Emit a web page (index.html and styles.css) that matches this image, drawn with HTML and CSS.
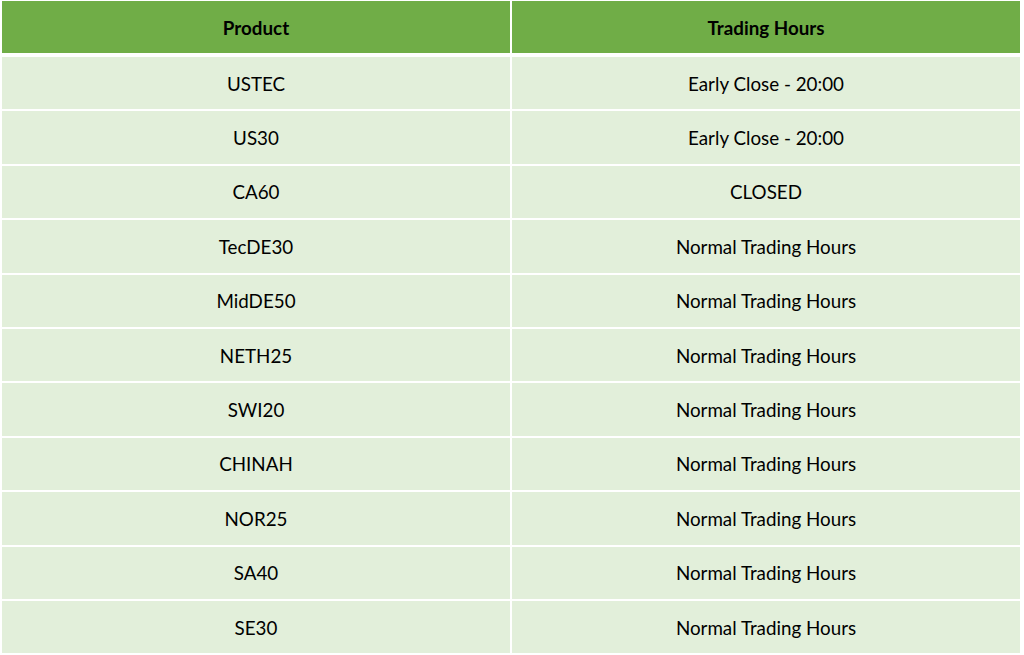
FILE: index.html
```html
<!DOCTYPE html>
<html>
<head>
<meta charset="utf-8">
<link rel="stylesheet" href="styles.css">
</head>
<body>
<div class="table">
  <div class="cell head">Product</div>
  <div class="cell head">Trading Hours</div>
  <div class="cell">USTEC</div><div class="cell">Early Close - 20:00</div>
  <div class="cell">US30</div><div class="cell">Early Close - 20:00</div>
  <div class="cell">CA60</div><div class="cell">CLOSED</div>
  <div class="cell">TecDE30</div><div class="cell">Normal Trading Hours</div>
  <div class="cell">MidDE50</div><div class="cell">Normal Trading Hours</div>
  <div class="cell">NETH25</div><div class="cell">Normal Trading Hours</div>
  <div class="cell">SWI20</div><div class="cell">Normal Trading Hours</div>
  <div class="cell">CHINAH</div><div class="cell">Normal Trading Hours</div>
  <div class="cell">NOR25</div><div class="cell">Normal Trading Hours</div>
  <div class="cell">SA40</div><div class="cell">Normal Trading Hours</div>
  <div class="cell">SE30</div><div class="cell">Normal Trading Hours</div>
</div>
</body>
</html>
```
FILE: styles.css
```css
html, body {
  margin: 0;
  padding: 0;
  background: #ffffff;
}
body {
  padding: 1px 0 0 2px;
  font-family: Lato, "Liberation Sans", sans-serif;
  font-size: 18.8px;
  color: #000000;
}
.table {
  display: grid;
  grid-template-columns: 508px 508px;
  grid-auto-rows: 52.4px;
  grid-template-rows: 54px;
  column-gap: 2px;
  row-gap: 2px;
}
.cell {
  display: flex;
  align-items: center;
  justify-content: center;
  background: #e2efda;
  height: 52.4px;
}
.head {
  background: #70ad47;
  font-weight: bold;
  height: 52px;
  margin-bottom: 2px;
}
```
